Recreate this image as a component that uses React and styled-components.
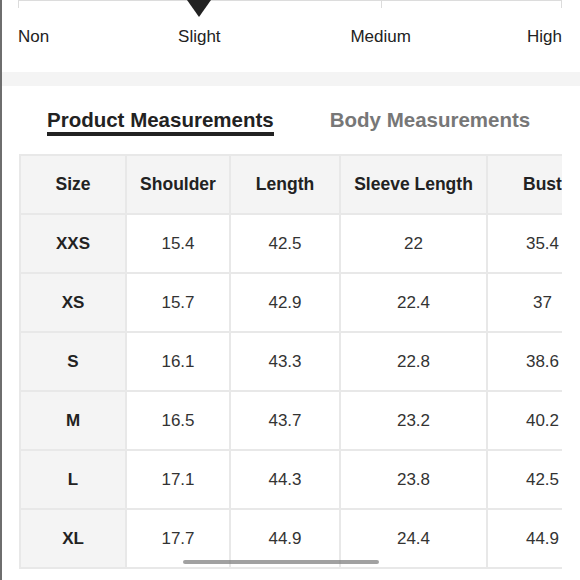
import React from "react";
import styled, { createGlobalStyle } from "styled-components";

const GlobalStyle = createGlobalStyle`
  body {
    margin: 0;
    font-family: "Liberation Sans", Arial, sans-serif;
    background: #fff;
  }
`;

// page frame
const Page = styled.div`
  width: 580px;
  height: 580px;
  box-sizing: border-box;
  border-left: 2px solid #6e6e6e;
  background: #fff;
  overflow: hidden;
`;

// stretch scale
const ScaleSection = styled.div`
  padding: 0 18px 0 16px;
`;

const Track = styled.div`
  position: relative;
  display: grid;
  grid-template-columns: repeat(3, 1fr);
  height: 8px;
`;

const Segment = styled.div`
  border-top: 1px solid #dcdcdc;
  border-left: 1px solid #dcdcdc;
  border-right: ${(p) => (p.last ? "1px solid #dcdcdc" : "none")};
`;

const Pointer = styled.div`
  position: absolute;
  top: 0;
  left: calc(33.333% - 12.5px);
  width: 0;
  height: 0;
  border-left: 12.5px solid transparent;
  border-right: 12.5px solid transparent;
  border-top: 17px solid #222;
`;

const Labels = styled.div`
  display: grid;
  grid-template-columns: repeat(6, 1fr);
  margin-top: 19px;
  font-size: 17px;
  line-height: 20px;
  color: #222;
`;

const Label = styled.div`
  grid-column: ${(p) => p.span};
  text-align: ${(p) => p.align};
  white-space: nowrap;
`;

const Band = styled.div`
  height: 14px;
  margin-top: 25px;
  background: #f4f4f4;
`;

// tabs
const Tabs = styled.div`
  display: flex;
  gap: 56px;
  padding-left: 45px;
  margin-top: 22px;
`;

const Tab = styled.div`
  font-size: 20.5px;
  line-height: 24px;
  font-weight: 700;
  color: ${(p) => (p.active ? "#222" : "#777")};
  border-bottom: 4px solid ${(p) => (p.active ? "#222" : "transparent")};
`;

// size table
const TableWrap = styled.div`
  position: relative;
  width: 543px;
  margin: 18px 0 0 17px;
  overflow: hidden;
`;

const Table = styled.table`
  border-collapse: collapse;
  table-layout: fixed;
  width: 580px;
  font-size: 17px;
`;

const HeadCell = styled.th`
  width: ${(p) => p.w - 2}px;
  height: 57px;
  padding: 0;
  border: 2px solid #e8e8e8;
  background: #f4f4f4;
  color: #222;
  font-size: 17.5px;
  font-weight: 700;
  text-align: center;
  white-space: nowrap;
`;

const Cell = styled.td`
  height: 57px;
  padding: 0;
  border: 2px solid #e8e8e8;
  background: ${(p) => (p.size ? "#f4f4f4" : "#fff")};
  color: ${(p) => (p.size ? "#222" : "#333")};
  font-weight: ${(p) => (p.size ? 700 : 400)};
  text-align: center;
  white-space: nowrap;
`;

const ScrollThumb = styled.div`
  position: absolute;
  left: 164px;
  top: 406px;
  width: 196px;
  height: 4px;
  border-radius: 2px;
  background: rgba(130, 130, 130, 0.75);
`;

const columns = [
  { name: "Size", w: 106 },
  { name: "Shoulder", w: 104 },
  { name: "Length", w: 110 },
  { name: "Sleeve Length", w: 147 },
  { name: "Bust", w: 111 },
];

const rows = [
  ["XXS", "15.4", "42.5", "22", "35.4"],
  ["XS", "15.7", "42.9", "22.4", "37"],
  ["S", "16.1", "43.3", "22.8", "38.6"],
  ["M", "16.5", "43.7", "23.2", "40.2"],
  ["L", "17.1", "44.3", "23.8", "42.5"],
  ["XL", "17.7", "44.9", "24.4", "44.9"],
];

export default function App() {
  return (
    <>
      <GlobalStyle />
      <Page>
        <ScaleSection>
          <Track>
            <Segment />
            <Segment />
            <Segment last />
            <Pointer />
          </Track>
          <Labels>
            <Label span="1 / 2" align="left">Non</Label>
            <Label span="2 / 4" align="center">Slight</Label>
            <Label span="4 / 6" align="center">Medium</Label>
            <Label span="6 / 7" align="right">High</Label>
          </Labels>
        </ScaleSection>
        <Band />
        <Tabs>
          <Tab active>Product Measurements</Tab>
          <Tab>Body Measurements</Tab>
        </Tabs>
        <TableWrap>
          <Table>
            <thead>
              <tr>
                {columns.map((c) => (
                  <HeadCell key={c.name} w={c.w}>
                    {c.name}
                  </HeadCell>
                ))}
              </tr>
            </thead>
            <tbody>
              {rows.map((r) => (
                <tr key={r[0]}>
                  {r.map((v, i) => (
                    <Cell key={i} size={i === 0}>
                      {v}
                    </Cell>
                  ))}
                </tr>
              ))}
            </tbody>
          </Table>
          <ScrollThumb />
        </TableWrap>
      </Page>
    </>
  );
}
